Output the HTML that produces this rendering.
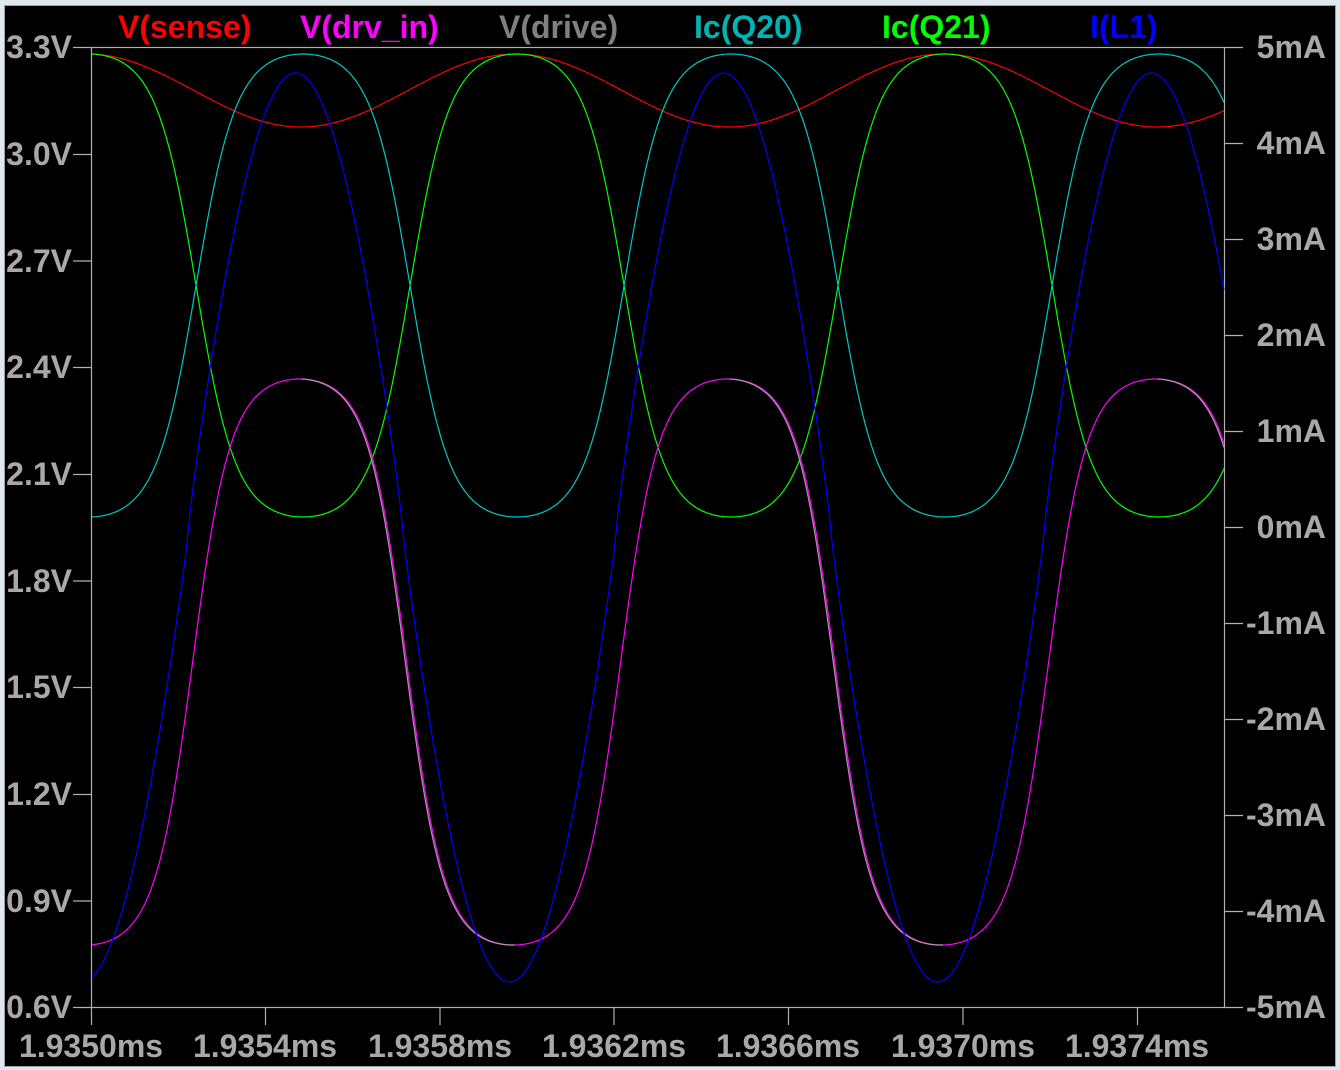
<!DOCTYPE html>
<html><head><meta charset="utf-8"><style>
html,body{margin:0;padding:0;background:#dfe7ef;width:1340px;height:1070px;overflow:hidden}
svg{display:block}
text{font-family:"Liberation Sans",Arial,sans-serif;font-weight:bold;font-size:32px}
</style></head><body>
<svg id="s" width="1340" height="1070" viewBox="0 0 1340 1070">
<rect x="0" y="0" width="1340" height="1070" fill="#dfe7ef"/>
<rect x="4.5" y="5.5" width="1331" height="1061" fill="#000" stroke="#a0a0a0" stroke-width="1"/>
<g stroke="#b0b0b0" stroke-width="1.2" fill="none">
<rect x="91.5" y="47.5" width="1133" height="960"/>
<path d="M73 47.5H91 M73 154.5H91 M73 261H91 M73 367.5H91 M73 474.5H91 M73 581H91 M73 687.5H91 M73 794.5H91 M73 901H91 M73 1007.5H91"/>
<path d="M1224 47.5H1243 M1224 143.5H1243 M1224 239.5H1243 M1224 335.5H1243 M1224 431.5H1243 M1224 527.5H1243 M1224 623.5H1243 M1224 719.5H1243 M1224 815.5H1243 M1224 911.5H1243 M1224 1007.5H1243"/>
<path d="M91.5 1007V1025 M265.5 1007V1025 M440 1007V1025 M614 1007V1025 M788.5 1007V1025 M963 1007V1025 M1137.5 1007V1025"/>
</g>
<g fill="#a8a8a8" text-anchor="end">
<text x="72" y="58">3.3V</text><text x="72" y="165">3.0V</text><text x="72" y="272">2.7V</text>
<text x="72" y="378">2.4V</text><text x="72" y="485">2.1V</text><text x="72" y="592">1.8V</text>
<text x="72" y="698">1.5V</text><text x="72" y="805">1.2V</text><text x="72" y="912">0.9V</text>
<text x="72" y="1018">0.6V</text>
<text x="1326" y="58">5mA</text><text x="1326" y="154">4mA</text><text x="1326" y="250">3mA</text>
<text x="1326" y="346">2mA</text><text x="1326" y="442">1mA</text><text x="1326" y="538">0mA</text>
<text x="1326" y="634">-1mA</text><text x="1326" y="730">-2mA</text><text x="1326" y="826">-3mA</text>
<text x="1326" y="922">-4mA</text><text x="1326" y="1018">-5mA</text>
</g>
<g fill="#a8a8a8" text-anchor="middle">
<text x="91" y="1057">1.9350ms</text><text x="265" y="1057">1.9354ms</text><text x="440" y="1057">1.9358ms</text>
<text x="614" y="1057">1.9362ms</text><text x="788" y="1057">1.9366ms</text><text x="963" y="1057">1.9370ms</text>
<text x="1137" y="1057">1.9374ms</text>
</g>
<g>
<text x="118" y="38" fill="#ff0000">V(sense)</text>
<text x="300" y="38" fill="#ff00ff">V(drv_in)</text>
<text x="499" y="38" fill="#808080">V(drive)</text>
<text x="694" y="38" fill="#00b4b4">Ic(Q20)</text>
<text x="882" y="38" fill="#00ff00">Ic(Q21)</text>
<text x="1090" y="38" fill="#0000ff">I(L1)</text>
</g>
<g id="tr" fill="none" stroke-width="1.2"></g>
</svg>
<script>
(function(){
var T=428, x0=301;
function th(x){return 2*Math.PI*(x-x0)/T;}
function sq(c,k){return Math.tanh(k*c)/Math.tanh(k);}
function path(f){var d="";for(var x=92;x<=1224;x+=1){var y=f(x);d+=(x==92?"M":"L")+x+" "+y.toFixed(1);}return d;}
var curves=[
 ["#ff0000",function(x){return 90.5+36.5*Math.cos(th(x));}],
 ["#00ff00",function(x){return 285.5+231.5*sq(Math.cos(th(x)-0.03),1.6);}],
 ["#00c8c8",function(x){return 285.5-231.5*sq(Math.cos(th(x)-0.03),1.6);}],
 ["#ff00ff",function(x){return 662-283*sq(Math.cos(th(x)+0.02),1.7);}],
 ["#a898a8",function(x){var c=Math.cos(th(x)+0.04);return Math.sin(th(x))>0?662-283*sq(c,1.7):9999;}],
 ["#0000ff",function(x){var c=Math.cos(th(x)+0.08);return 527.5-454.5*Math.sign(c)*Math.pow(Math.abs(c),0.9);}]
];
var g=document.getElementById("tr");
curves.forEach(function(c){
 var d="",pen=false;
 for(var x=92;x<=1224;x++){var y=c[1](x);if(y>2000){pen=false;continue;}d+=(pen?"L":"M")+x+" "+y.toFixed(1);pen=true;}
 var p=document.createElementNS("http://www.w3.org/2000/svg","path");p.setAttribute("d",d);p.setAttribute("stroke",c[0]);g.appendChild(p);});
})();
</script>
</body></html>
